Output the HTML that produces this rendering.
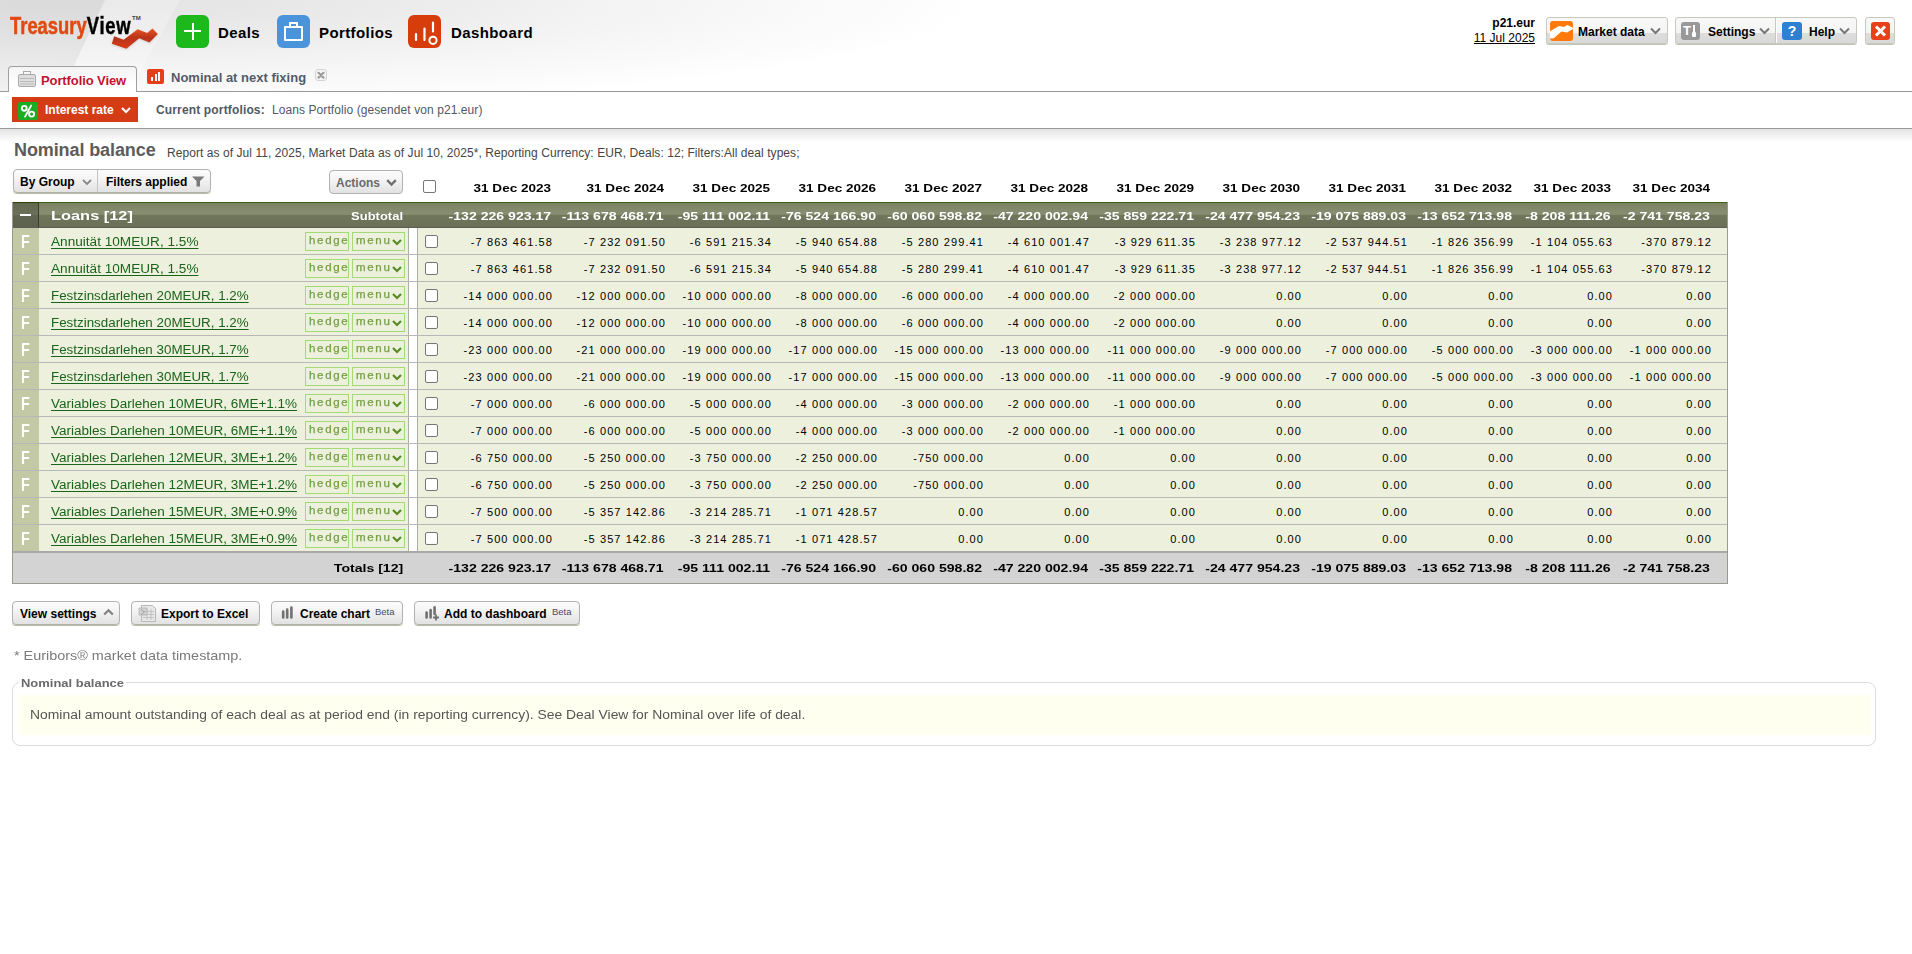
<!DOCTYPE html>
<html><head><meta charset="utf-8">
<style>
*{box-sizing:border-box;margin:0;padding:0}
html,body{width:1912px;height:954px;overflow:hidden;background:#fff}
body{font-family:"Liberation Sans",sans-serif;font-size:12px;color:#000;position:relative}
.abs{position:absolute}
#hdr{position:absolute;left:0;top:0;width:1912px;height:91px;
 background:radial-gradient(ellipse 900px 110px at 80px 0px,#e2e2e2 0%,#ebebeb 35%,#f5f5f5 65%,#fcfcfc 90%,#ffffff 100%);}
.navic{position:absolute;top:15px;width:33px;height:33px;border-radius:6px}
.navtx{position:absolute;top:24px;font-weight:bold;font-size:15px;line-height:18px;color:#000;letter-spacing:0.4px}
.btn{position:absolute;border:1px solid #c8c9bd;border-radius:3px;
 background:linear-gradient(#f8f8f8 0%,#f4f4f4 58%,#dddddd 61%,#d9d9d9 100%);box-shadow:0 1px 0 #c4c4b4}
.btn2{position:absolute;border:1px solid #b2b2b2;border-radius:4px;background:linear-gradient(#fbfbfb 0%,#f4f4f4 40%,#e9e9e9 75%,#e2e2e2 100%);box-shadow:0 1px 0 #b9bc9f}
.btxt{position:absolute;font-weight:bold;font-size:12px;line-height:14px}
.chev{position:absolute}
.r{position:absolute;text-align:right;white-space:nowrap}
.r span,.lnk span,.gt span,.hbox span{display:inline-block}
.hd{font-weight:bold;font-size:11px;line-height:13px;color:#000}
.hd span{transform:scaleX(1.229);transform-origin:100% 50%}
.grp{background:linear-gradient(#7b8263 0%,#878d70 40%,#838a6c 50%,#70765b 52%,#6a7056 100%);border-top:1px solid #3d5e0e;border-bottom:1px solid #5c5c58}
.grpm{background:linear-gradient(#62674f 0%,#6b7059 48%,#5f6550 52%,#5d624e 100%);border-top:1px solid #2c4600;border-right:1px solid #3a3e30;border-bottom:1px solid #5c5c58}
.gt{font-weight:bold;font-size:11px;line-height:13px;color:#fff;position:absolute;white-space:nowrap}
.gt span{transform:scaleX(1.28);transform-origin:100% 50%}
.rowbg{left:13px;width:1714px;height:27px;background:#edf0dd;border-bottom:1px solid #b8b8b8}
.fcell{left:13px;width:26px;height:26px;background:#c2c9a4;color:#fff;font-weight:bold;font-size:18px;line-height:26px;text-align:center}
.fcell span{display:inline-block;transform:scaleX(0.8);position:relative;top:1px;left:-1px}
.lnk{left:51px;font-size:12px;line-height:14px;color:#1b641b;white-space:nowrap}
.lnk span{transform-origin:0 50%;text-decoration:underline;text-underline-offset:2px}
.hbox{left:305px;width:44px;height:19px;border:1px solid #a3d977;color:#76a044;font-size:10.5px;line-height:15px;padding-left:3px;letter-spacing:1.5px;-webkit-text-stroke:0.25px #76a044}
.mbox{left:352px;width:53px;height:19px;border:1px solid #a3d977;color:#76a044;font-size:10.5px;line-height:15px;padding-left:3px;letter-spacing:1.5px;-webkit-text-stroke:0.25px #76a044}
.hbox span,.mbox span{display:inline-block;transform:scaleX(1.1);transform-origin:0 50%}
.mbox svg{position:absolute;left:39px;top:6px}
.sep{left:408px;width:10px;height:26px;background:#fff;border-left:1px solid #b0aca0;border-right:1px solid #b0aca0}
.cb{left:425px;width:13px;height:13px;border:1px solid #767676;border-radius:2px;background:#fff}
.nv{font-size:11px;line-height:13px;color:#000}
.nv span{letter-spacing:1.1px;margin-right:-2px}
.tt{font-weight:bold;font-size:11px;line-height:13px;color:#000}
.tt span{transform:scaleX(1.28);transform-origin:100% 50%}
.beta{font-size:9.5px;line-height:11px;color:#4a4a6a;white-space:nowrap}
.ft{font-size:13px;line-height:15px;color:#7a7a7a;white-space:nowrap}
.ft span,.lg span,.ds span{display:inline-block;transform-origin:0 50%}
.ft span{transform:scaleX(1.108)}
.lg{font-size:11px;line-height:13px;font-weight:bold;color:#6a6a6a;white-space:nowrap}
.lg span{transform:scaleX(1.178)}
.ds{font-size:12px;line-height:14px;color:#555;white-space:nowrap}
.ds span{transform:scaleX(1.158)}
</style></head><body>
<div id="hdr"></div>
<div class="abs" style="left:0;top:0;width:200px;height:91px;background:rgba(0,0,0,0.035);clip-path:polygon(0 0,105px 0,62px 91px,0 91px)"></div>
<div class="abs" style="left:0;top:0;width:260px;height:91px;background:rgba(255,255,255,0.25);clip-path:polygon(105px 0,180px 0,130px 91px,62px 91px)"></div>
<!-- logo -->
<div class="abs" style="left:10px;top:13px;font-size:23px;line-height:26px;font-weight:bold;-webkit-text-stroke:0.5px currentColor;transform:scaleX(0.80);transform-origin:0 0;color:#e04a10;white-space:nowrap">Treasury<span style="color:#000;letter-spacing:0.9px">View</span></div>
<div class="abs" style="left:132px;top:15px;font-size:6px;line-height:7px;font-weight:bold;color:#444">TM</div>
<svg class="abs" style="left:110px;top:27px" width="52" height="26" viewBox="0 0 52 26">
 <defs><linearGradient id="sw" x1="0" y1="0" x2="0" y2="1"><stop offset="0" stop-color="#ec5124"/><stop offset="0.45" stop-color="#b8351a"/><stop offset="1" stop-color="#d93c18"/></linearGradient>
 <filter id="sh" x="-20%" y="-20%" width="140%" height="160%"><feGaussianBlur stdDeviation="1.2"/></filter></defs>
 <path d="M4.2 10.2 L13.6 13.7 L27.7 3.3 L37.2 7.1 L42.4 2.6 L47.8 8.1 L39.5 16.5 L29.2 12.3 L16.4 22.7 L1.8 17.7 Z" fill="#999" opacity="0.35" filter="url(#sh)"/>
 <path d="M4.2 9.2 L13.6 12.7 L27.7 2.3 L37.2 6.1 L42.4 1.6 L47.8 7.1 L39.5 15.5 L29.2 11.3 L16.4 21.7 L1.8 16.7 Z" fill="url(#sw)"/>
</svg>
<!-- nav -->
<div class="navic" style="left:176px;background:#1cb81c">
 <div class="abs" style="left:8px;top:15px;width:17px;height:2px;background:#fff"></div>
 <div class="abs" style="left:15.5px;top:8px;width:2px;height:17px;background:#fff"></div>
</div>
<div class="navtx" style="left:218px">Deals</div>
<div class="navic" style="left:277px;background:#4a94dc">
 <div class="abs" style="left:7px;top:11px;width:19px;height:15px;border:2px solid #fff;border-radius:1px"></div>
 <div class="abs" style="left:12px;top:7px;width:9px;height:5px;border:2px solid #fff;border-bottom:none;border-radius:1px 1px 0 0"></div>
</div>
<div class="navtx" style="left:319px">Portfolios</div>
<div class="navic" style="left:408px;background:#d73d0a">
 <svg class="abs" style="left:0;top:0" width="33" height="33" viewBox="0 0 33 33">
  <path d="M8 19 V25 M16.5 13.5 V25 M25 7.5 V16.5" stroke="#fff" stroke-width="2.2" stroke-linecap="round"/>
  <circle cx="25" cy="25.3" r="3.6" fill="none" stroke="#fff" stroke-width="2"/>
 </svg>
</div>
<div class="navtx" style="left:451px">Dashboard</div>

<!-- right header -->
<div class="abs" style="left:1435px;top:16px;width:100px;text-align:right;font-weight:bold;font-size:12px;line-height:14px">p21.eur</div>
<div class="abs" style="left:1435px;top:31px;width:100px;text-align:right;font-size:12px;line-height:14px"><span style="text-decoration:underline">11 Jul 2025</span></div>

<div class="btn" style="left:1546px;top:17px;width:122px;height:27px"></div>
<div class="abs" style="left:1550px;top:21px;width:23px;height:20px;background:#ff7a0a;border-radius:3px;overflow:hidden">
 <svg width="23" height="20" viewBox="0 0 23 20"><path d="M-1 10.8 L9 4.9 L14.1 5.9 L17.3 4.1 L23.5 6.9 L23.5 7.6 L16.9 11.6 L11.4 10.6 L3.8 17.2 L-1 17.6 Z" fill="#fff"/></svg>
</div>
<div class="btxt" style="left:1578px;top:25px">Market data</div>
<svg class="chev" style="left:1650px;top:27px" width="11" height="8" viewBox="0 0 11 8"><path d="M1 1.5 L5.5 6 L10 1.5" stroke="#777" stroke-width="2" fill="none"/></svg>

<div class="btn" style="left:1675px;top:17px;width:182px;height:27px"></div>
<div class="abs" style="left:1775px;top:18px;width:1px;height:25px;background:#c8c9bd"></div>
<div class="abs" style="left:1776px;top:18px;width:1px;height:25px;background:#fff"></div>
<div class="abs" style="left:1681px;top:22px;width:19px;height:18px;background:#999;border-radius:3px"></div>
<div class="abs" style="left:1683px;top:23px;font-size:13px;font-weight:bold;color:#fff;line-height:16px">T</div>
<div class="abs" style="left:1693px;top:25px;width:2px;height:8px;background:#fff"></div>
<div class="abs" style="left:1692px;top:32px;width:4px;height:5px;background:#fff;border-radius:1px"></div>
<div class="btxt" style="left:1708px;top:25px">Settings</div>
<svg class="chev" style="left:1759px;top:27px" width="11" height="8" viewBox="0 0 11 8"><path d="M1 1.5 L5.5 6 L10 1.5" stroke="#777" stroke-width="2" fill="none"/></svg>
<div class="abs" style="left:1782px;top:22px;width:20px;height:18px;background:#2e80d2;border-radius:3px;color:#fff;font-weight:bold;font-size:14px;line-height:18px;text-align:center">?</div>
<div class="btxt" style="left:1809px;top:25px">Help</div>
<svg class="chev" style="left:1839px;top:27px" width="11" height="8" viewBox="0 0 11 8"><path d="M1 1.5 L5.5 6 L10 1.5" stroke="#777" stroke-width="2" fill="none"/></svg>

<div class="btn" style="left:1865px;top:17px;width:30px;height:27px"></div>
<div class="abs" style="left:1871px;top:22px;width:19px;height:18px;background:#e8411a;border-radius:3px">
 <svg width="19" height="18" viewBox="0 0 19 18"><path d="M5 4.5 L14 13.5 M14 4.5 L5 13.5" stroke="#fff" stroke-width="3"/></svg>
</div>


<!-- tabs -->
<div class="abs" style="left:0;top:91px;width:1912px;height:1px;background:#9a9a9a"></div>
<div class="abs" style="left:8px;top:66px;width:129px;height:26px;border:1px solid #a0a0a0;border-bottom:none;border-radius:4px 4px 0 0;background:linear-gradient(#f4f4f4,#fff 70%)"></div>
<svg class="abs" style="left:18px;top:71px" width="18" height="16" viewBox="0 0 18 16">
 <rect x="0.5" y="3.5" width="17" height="12" rx="1.5" fill="#ddd" stroke="#aaa"/>
 <rect x="5.5" y="0.5" width="7" height="3" fill="none" stroke="#aaa"/>
 <path d="M2 7.5 H16 M2 10.5 H16 M2 13 H16" stroke="#bbb"/>
</svg>
<div class="abs" style="left:41px;top:73px;font-weight:bold;font-size:13px;line-height:15px;color:#c4122e;white-space:nowrap;letter-spacing:-0.1px">Portfolio View</div>
<div class="abs" style="left:147px;top:69px;width:17px;height:15px;background:#e2401a;border-radius:2px">
 <div class="abs" style="left:4px;top:8px;width:2px;height:4px;background:#fff"></div>
 <div class="abs" style="left:7.5px;top:5px;width:2px;height:7px;background:#fff"></div>
 <div class="abs" style="left:11px;top:3px;width:2px;height:9px;background:#fff"></div>
</div>
<div class="abs" style="left:171px;top:70px;font-weight:bold;font-size:13px;line-height:15px;color:#545b68;white-space:nowrap">Nominal at next fixing</div>
<div class="abs" style="left:315px;top:69px;width:12px;height:12px;border:1px solid #d2d4d4;border-radius:3px;background:#f4f4f4">
 <svg class="abs" style="left:0;top:0" width="10" height="10" viewBox="0 0 10 10"><path d="M2.5 2.8 L7.5 7.6 M7.5 2.8 L2.5 7.6" stroke="#9c9c9c" stroke-width="2.2" stroke-linecap="round"/></svg>
</div>

<!-- subbar -->
<div class="abs" style="left:12px;top:97px;width:126px;height:25px;background:#d43c15"></div>
<div class="abs" style="left:18px;top:102px;width:20px;height:18px;background:#1aac22;border-radius:2px">
 <svg width="20" height="18" viewBox="0 0 20 18"><circle cx="6.3" cy="6.3" r="2.4" fill="none" stroke="#fff" stroke-width="1.9"/><circle cx="13.6" cy="12.1" r="2.5" fill="none" stroke="#fff" stroke-width="1.9"/><path d="M13.1 3.6 L7.1 14.6" stroke="#fff" stroke-width="1.9" stroke-linecap="round"/></svg>
</div>
<div class="abs" style="left:45px;top:103px;font-weight:bold;font-size:12px;line-height:14px;color:#fff;white-space:nowrap">Interest rate</div>
<svg class="abs" style="left:121px;top:107px" width="10" height="7" viewBox="0 0 10 7"><path d="M1 1 L5 5 L9 1" stroke="#fff" stroke-width="2" fill="none"/></svg>
<div class="abs" style="left:156px;top:103px;font-weight:bold;font-size:12px;line-height:14px;color:#505866;white-space:nowrap;letter-spacing:0.15px">Current portfolios:</div>
<div class="abs" style="left:272px;top:103px;font-size:12px;line-height:14px;color:#505866;white-space:nowrap;letter-spacing:0.08px">Loans Portfolio (gesendet von p21.eur)</div>
<div class="abs" style="left:0;top:128px;width:1912px;height:1px;background:#9a9a9a"></div>
<div class="abs" style="left:0;top:129px;width:1912px;height:13px;background:linear-gradient(#e4e4e4,#f4f4f4 60%,#fff)"></div>

<!-- title -->
<div class="abs" style="left:14px;top:140px;font-weight:bold;font-size:18px;line-height:20px;color:#5c5c5c;letter-spacing:-0.1px;white-space:nowrap">Nominal balance</div>
<div class="abs" style="left:167px;top:146px;font-size:12px;line-height:14px;color:#444;white-space:nowrap;letter-spacing:0.06px">Report as of Jul 11, 2025, Market Data as of Jul 10, 2025*, Reporting Currency: EUR, Deals: 12; Filters:All deal types;</div>

<!-- toolbar -->
<div class="btn2" style="left:13px;top:169px;width:198px;height:24px"></div>
<div class="abs" style="left:97px;top:170px;width:1px;height:22px;background:#c4c4c4"></div>
<div class="btxt" style="left:20px;top:175px">By Group</div>
<svg class="chev" style="left:82px;top:179px" width="10" height="7" viewBox="0 0 10 7"><path d="M1 1 L5 5 L9 1" stroke="#888" stroke-width="1.8" fill="none"/></svg>
<div class="btxt" style="left:106px;top:175px">Filters applied</div>
<svg class="abs" style="left:192px;top:176px" width="13" height="11" viewBox="0 0 13 11"><path d="M0 0.5 H12.5 L8 5 V10.5 L4.5 10.5 V5 Z" fill="#7a7a7a"/></svg>
<div class="btn2" style="left:329px;top:170px;width:74px;height:24px;box-shadow:none"></div>
<div class="btxt" style="left:336px;top:176px;color:#6a6a6a">Actions</div>
<svg class="chev" style="left:386px;top:179px" width="11" height="8" viewBox="0 0 11 8"><path d="M1.2 1.2 L5.5 5.5 L9.8 1.2" stroke="#707070" stroke-width="2.4" fill="none"/></svg>
<div class="abs" style="left:423px;top:180px;width:13px;height:13px;border:1px solid #767676;border-radius:2px;background:#fff"></div>
<!-- TABLE -->
<div class="r hd" style="right:1361px;top:182px"><span>31 Dec 2023</span></div>
<div class="r hd" style="right:1248px;top:182px"><span>31 Dec 2024</span></div>
<div class="r hd" style="right:1142px;top:182px"><span>31 Dec 2025</span></div>
<div class="r hd" style="right:1036px;top:182px"><span>31 Dec 2026</span></div>
<div class="r hd" style="right:930px;top:182px"><span>31 Dec 2027</span></div>
<div class="r hd" style="right:824px;top:182px"><span>31 Dec 2028</span></div>
<div class="r hd" style="right:718px;top:182px"><span>31 Dec 2029</span></div>
<div class="r hd" style="right:612px;top:182px"><span>31 Dec 2030</span></div>
<div class="r hd" style="right:506px;top:182px"><span>31 Dec 2031</span></div>
<div class="r hd" style="right:400px;top:182px"><span>31 Dec 2032</span></div>
<div class="r hd" style="right:301px;top:182px"><span>31 Dec 2033</span></div>
<div class="r hd" style="right:202px;top:182px"><span>31 Dec 2034</span></div>
<div class="abs" style="left:12px;top:202px;width:1716px;height:382px;border:1px solid #9a9a90;border-top:none"></div>
<div class="abs grp" style="left:13px;top:202px;width:1714px;height:26px"></div>
<div class="abs grpm" style="left:13px;top:202px;width:26px;height:26px"></div>
<div class="abs" style="left:20px;top:214px;width:11px;height:2px;background:#fff"></div>
<div class="abs gt" style="left:51px;top:209px;font-size:13px"><span style="transform-origin:0 50%;transform:scaleX(1.26)">Loans [12]</span></div>
<div class="r gt" style="right:1509px;top:210px"><span style="transform:scaleX(1.18)">Subtotal</span></div>
<div class="r gt" style="right:1361px;top:210px"><span>-132 226 923.17</span></div>
<div class="r gt" style="right:1248px;top:210px"><span>-113 678 468.71</span></div>
<div class="r gt" style="right:1142px;top:210px"><span>-95 111 002.11</span></div>
<div class="r gt" style="right:1036px;top:210px"><span>-76 524 166.90</span></div>
<div class="r gt" style="right:930px;top:210px"><span>-60 060 598.82</span></div>
<div class="r gt" style="right:824px;top:210px"><span>-47 220 002.94</span></div>
<div class="r gt" style="right:718px;top:210px"><span>-35 859 222.71</span></div>
<div class="r gt" style="right:612px;top:210px"><span>-24 477 954.23</span></div>
<div class="r gt" style="right:506px;top:210px"><span>-19 075 889.03</span></div>
<div class="r gt" style="right:400px;top:210px"><span>-13 652 713.98</span></div>
<div class="r gt" style="right:301px;top:210px"><span>-8 208 111.26</span></div>
<div class="r gt" style="right:202px;top:210px"><span>-2 741 758.23</span></div>
<div class="abs rowbg" style="top:228px"></div>
<div class="abs fcell" style="top:228px"><span>F</span></div>
<div class="abs lnk" style="top:235px"><span style="transform:scaleX(1.134)">Annuität 10MEUR, 1.5%</span></div>
<div class="abs hbox" style="top:232px"><span>hedge</span></div>
<div class="abs mbox" style="top:232px"><span>menu</span><svg width="10" height="7" viewBox="0 0 10 7"><path d="M1 1 L5 5 L9 1" stroke="#5b8a22" stroke-width="2.2" fill="none"/></svg></div>
<div class="abs sep" style="top:228px"></div>
<div class="abs cb" style="top:235px"></div>
<div class="r nv" style="right:1361px;top:236px"><span>-7 863 461.58</span></div>
<div class="r nv" style="right:1248px;top:236px"><span>-7 232 091.50</span></div>
<div class="r nv" style="right:1142px;top:236px"><span>-6 591 215.34</span></div>
<div class="r nv" style="right:1036px;top:236px"><span>-5 940 654.88</span></div>
<div class="r nv" style="right:930px;top:236px"><span>-5 280 299.41</span></div>
<div class="r nv" style="right:824px;top:236px"><span>-4 610 001.47</span></div>
<div class="r nv" style="right:718px;top:236px"><span>-3 929 611.35</span></div>
<div class="r nv" style="right:612px;top:236px"><span>-3 238 977.12</span></div>
<div class="r nv" style="right:506px;top:236px"><span>-2 537 944.51</span></div>
<div class="r nv" style="right:400px;top:236px"><span>-1 826 356.99</span></div>
<div class="r nv" style="right:301px;top:236px"><span>-1 104 055.63</span></div>
<div class="r nv" style="right:202px;top:236px"><span>-370 879.12</span></div>
<div class="abs rowbg" style="top:255px"></div>
<div class="abs fcell" style="top:255px"><span>F</span></div>
<div class="abs lnk" style="top:262px"><span style="transform:scaleX(1.134)">Annuität 10MEUR, 1.5%</span></div>
<div class="abs hbox" style="top:259px"><span>hedge</span></div>
<div class="abs mbox" style="top:259px"><span>menu</span><svg width="10" height="7" viewBox="0 0 10 7"><path d="M1 1 L5 5 L9 1" stroke="#5b8a22" stroke-width="2.2" fill="none"/></svg></div>
<div class="abs sep" style="top:255px"></div>
<div class="abs cb" style="top:262px"></div>
<div class="r nv" style="right:1361px;top:263px"><span>-7 863 461.58</span></div>
<div class="r nv" style="right:1248px;top:263px"><span>-7 232 091.50</span></div>
<div class="r nv" style="right:1142px;top:263px"><span>-6 591 215.34</span></div>
<div class="r nv" style="right:1036px;top:263px"><span>-5 940 654.88</span></div>
<div class="r nv" style="right:930px;top:263px"><span>-5 280 299.41</span></div>
<div class="r nv" style="right:824px;top:263px"><span>-4 610 001.47</span></div>
<div class="r nv" style="right:718px;top:263px"><span>-3 929 611.35</span></div>
<div class="r nv" style="right:612px;top:263px"><span>-3 238 977.12</span></div>
<div class="r nv" style="right:506px;top:263px"><span>-2 537 944.51</span></div>
<div class="r nv" style="right:400px;top:263px"><span>-1 826 356.99</span></div>
<div class="r nv" style="right:301px;top:263px"><span>-1 104 055.63</span></div>
<div class="r nv" style="right:202px;top:263px"><span>-370 879.12</span></div>
<div class="abs rowbg" style="top:282px"></div>
<div class="abs fcell" style="top:282px"><span>F</span></div>
<div class="abs lnk" style="top:289px"><span style="transform:scaleX(1.114)">Festzinsdarlehen 20MEUR, 1.2%</span></div>
<div class="abs hbox" style="top:286px"><span>hedge</span></div>
<div class="abs mbox" style="top:286px"><span>menu</span><svg width="10" height="7" viewBox="0 0 10 7"><path d="M1 1 L5 5 L9 1" stroke="#5b8a22" stroke-width="2.2" fill="none"/></svg></div>
<div class="abs sep" style="top:282px"></div>
<div class="abs cb" style="top:289px"></div>
<div class="r nv" style="right:1361px;top:290px"><span>-14 000 000.00</span></div>
<div class="r nv" style="right:1248px;top:290px"><span>-12 000 000.00</span></div>
<div class="r nv" style="right:1142px;top:290px"><span>-10 000 000.00</span></div>
<div class="r nv" style="right:1036px;top:290px"><span>-8 000 000.00</span></div>
<div class="r nv" style="right:930px;top:290px"><span>-6 000 000.00</span></div>
<div class="r nv" style="right:824px;top:290px"><span>-4 000 000.00</span></div>
<div class="r nv" style="right:718px;top:290px"><span>-2 000 000.00</span></div>
<div class="r nv" style="right:612px;top:290px"><span>0.00</span></div>
<div class="r nv" style="right:506px;top:290px"><span>0.00</span></div>
<div class="r nv" style="right:400px;top:290px"><span>0.00</span></div>
<div class="r nv" style="right:301px;top:290px"><span>0.00</span></div>
<div class="r nv" style="right:202px;top:290px"><span>0.00</span></div>
<div class="abs rowbg" style="top:309px"></div>
<div class="abs fcell" style="top:309px"><span>F</span></div>
<div class="abs lnk" style="top:316px"><span style="transform:scaleX(1.114)">Festzinsdarlehen 20MEUR, 1.2%</span></div>
<div class="abs hbox" style="top:313px"><span>hedge</span></div>
<div class="abs mbox" style="top:313px"><span>menu</span><svg width="10" height="7" viewBox="0 0 10 7"><path d="M1 1 L5 5 L9 1" stroke="#5b8a22" stroke-width="2.2" fill="none"/></svg></div>
<div class="abs sep" style="top:309px"></div>
<div class="abs cb" style="top:316px"></div>
<div class="r nv" style="right:1361px;top:317px"><span>-14 000 000.00</span></div>
<div class="r nv" style="right:1248px;top:317px"><span>-12 000 000.00</span></div>
<div class="r nv" style="right:1142px;top:317px"><span>-10 000 000.00</span></div>
<div class="r nv" style="right:1036px;top:317px"><span>-8 000 000.00</span></div>
<div class="r nv" style="right:930px;top:317px"><span>-6 000 000.00</span></div>
<div class="r nv" style="right:824px;top:317px"><span>-4 000 000.00</span></div>
<div class="r nv" style="right:718px;top:317px"><span>-2 000 000.00</span></div>
<div class="r nv" style="right:612px;top:317px"><span>0.00</span></div>
<div class="r nv" style="right:506px;top:317px"><span>0.00</span></div>
<div class="r nv" style="right:400px;top:317px"><span>0.00</span></div>
<div class="r nv" style="right:301px;top:317px"><span>0.00</span></div>
<div class="r nv" style="right:202px;top:317px"><span>0.00</span></div>
<div class="abs rowbg" style="top:336px"></div>
<div class="abs fcell" style="top:336px"><span>F</span></div>
<div class="abs lnk" style="top:343px"><span style="transform:scaleX(1.114)">Festzinsdarlehen 30MEUR, 1.7%</span></div>
<div class="abs hbox" style="top:340px"><span>hedge</span></div>
<div class="abs mbox" style="top:340px"><span>menu</span><svg width="10" height="7" viewBox="0 0 10 7"><path d="M1 1 L5 5 L9 1" stroke="#5b8a22" stroke-width="2.2" fill="none"/></svg></div>
<div class="abs sep" style="top:336px"></div>
<div class="abs cb" style="top:343px"></div>
<div class="r nv" style="right:1361px;top:344px"><span>-23 000 000.00</span></div>
<div class="r nv" style="right:1248px;top:344px"><span>-21 000 000.00</span></div>
<div class="r nv" style="right:1142px;top:344px"><span>-19 000 000.00</span></div>
<div class="r nv" style="right:1036px;top:344px"><span>-17 000 000.00</span></div>
<div class="r nv" style="right:930px;top:344px"><span>-15 000 000.00</span></div>
<div class="r nv" style="right:824px;top:344px"><span>-13 000 000.00</span></div>
<div class="r nv" style="right:718px;top:344px"><span>-11 000 000.00</span></div>
<div class="r nv" style="right:612px;top:344px"><span>-9 000 000.00</span></div>
<div class="r nv" style="right:506px;top:344px"><span>-7 000 000.00</span></div>
<div class="r nv" style="right:400px;top:344px"><span>-5 000 000.00</span></div>
<div class="r nv" style="right:301px;top:344px"><span>-3 000 000.00</span></div>
<div class="r nv" style="right:202px;top:344px"><span>-1 000 000.00</span></div>
<div class="abs rowbg" style="top:363px"></div>
<div class="abs fcell" style="top:363px"><span>F</span></div>
<div class="abs lnk" style="top:370px"><span style="transform:scaleX(1.114)">Festzinsdarlehen 30MEUR, 1.7%</span></div>
<div class="abs hbox" style="top:367px"><span>hedge</span></div>
<div class="abs mbox" style="top:367px"><span>menu</span><svg width="10" height="7" viewBox="0 0 10 7"><path d="M1 1 L5 5 L9 1" stroke="#5b8a22" stroke-width="2.2" fill="none"/></svg></div>
<div class="abs sep" style="top:363px"></div>
<div class="abs cb" style="top:370px"></div>
<div class="r nv" style="right:1361px;top:371px"><span>-23 000 000.00</span></div>
<div class="r nv" style="right:1248px;top:371px"><span>-21 000 000.00</span></div>
<div class="r nv" style="right:1142px;top:371px"><span>-19 000 000.00</span></div>
<div class="r nv" style="right:1036px;top:371px"><span>-17 000 000.00</span></div>
<div class="r nv" style="right:930px;top:371px"><span>-15 000 000.00</span></div>
<div class="r nv" style="right:824px;top:371px"><span>-13 000 000.00</span></div>
<div class="r nv" style="right:718px;top:371px"><span>-11 000 000.00</span></div>
<div class="r nv" style="right:612px;top:371px"><span>-9 000 000.00</span></div>
<div class="r nv" style="right:506px;top:371px"><span>-7 000 000.00</span></div>
<div class="r nv" style="right:400px;top:371px"><span>-5 000 000.00</span></div>
<div class="r nv" style="right:301px;top:371px"><span>-3 000 000.00</span></div>
<div class="r nv" style="right:202px;top:371px"><span>-1 000 000.00</span></div>
<div class="abs rowbg" style="top:390px"></div>
<div class="abs fcell" style="top:390px"><span>F</span></div>
<div class="abs lnk" style="top:397px"><span style="transform:scaleX(1.124)">Variables Darlehen 10MEUR, 6ME+1.1%</span></div>
<div class="abs hbox" style="top:394px"><span>hedge</span></div>
<div class="abs mbox" style="top:394px"><span>menu</span><svg width="10" height="7" viewBox="0 0 10 7"><path d="M1 1 L5 5 L9 1" stroke="#5b8a22" stroke-width="2.2" fill="none"/></svg></div>
<div class="abs sep" style="top:390px"></div>
<div class="abs cb" style="top:397px"></div>
<div class="r nv" style="right:1361px;top:398px"><span>-7 000 000.00</span></div>
<div class="r nv" style="right:1248px;top:398px"><span>-6 000 000.00</span></div>
<div class="r nv" style="right:1142px;top:398px"><span>-5 000 000.00</span></div>
<div class="r nv" style="right:1036px;top:398px"><span>-4 000 000.00</span></div>
<div class="r nv" style="right:930px;top:398px"><span>-3 000 000.00</span></div>
<div class="r nv" style="right:824px;top:398px"><span>-2 000 000.00</span></div>
<div class="r nv" style="right:718px;top:398px"><span>-1 000 000.00</span></div>
<div class="r nv" style="right:612px;top:398px"><span>0.00</span></div>
<div class="r nv" style="right:506px;top:398px"><span>0.00</span></div>
<div class="r nv" style="right:400px;top:398px"><span>0.00</span></div>
<div class="r nv" style="right:301px;top:398px"><span>0.00</span></div>
<div class="r nv" style="right:202px;top:398px"><span>0.00</span></div>
<div class="abs rowbg" style="top:417px"></div>
<div class="abs fcell" style="top:417px"><span>F</span></div>
<div class="abs lnk" style="top:424px"><span style="transform:scaleX(1.124)">Variables Darlehen 10MEUR, 6ME+1.1%</span></div>
<div class="abs hbox" style="top:421px"><span>hedge</span></div>
<div class="abs mbox" style="top:421px"><span>menu</span><svg width="10" height="7" viewBox="0 0 10 7"><path d="M1 1 L5 5 L9 1" stroke="#5b8a22" stroke-width="2.2" fill="none"/></svg></div>
<div class="abs sep" style="top:417px"></div>
<div class="abs cb" style="top:424px"></div>
<div class="r nv" style="right:1361px;top:425px"><span>-7 000 000.00</span></div>
<div class="r nv" style="right:1248px;top:425px"><span>-6 000 000.00</span></div>
<div class="r nv" style="right:1142px;top:425px"><span>-5 000 000.00</span></div>
<div class="r nv" style="right:1036px;top:425px"><span>-4 000 000.00</span></div>
<div class="r nv" style="right:930px;top:425px"><span>-3 000 000.00</span></div>
<div class="r nv" style="right:824px;top:425px"><span>-2 000 000.00</span></div>
<div class="r nv" style="right:718px;top:425px"><span>-1 000 000.00</span></div>
<div class="r nv" style="right:612px;top:425px"><span>0.00</span></div>
<div class="r nv" style="right:506px;top:425px"><span>0.00</span></div>
<div class="r nv" style="right:400px;top:425px"><span>0.00</span></div>
<div class="r nv" style="right:301px;top:425px"><span>0.00</span></div>
<div class="r nv" style="right:202px;top:425px"><span>0.00</span></div>
<div class="abs rowbg" style="top:444px"></div>
<div class="abs fcell" style="top:444px"><span>F</span></div>
<div class="abs lnk" style="top:451px"><span style="transform:scaleX(1.124)">Variables Darlehen 12MEUR, 3ME+1.2%</span></div>
<div class="abs hbox" style="top:448px"><span>hedge</span></div>
<div class="abs mbox" style="top:448px"><span>menu</span><svg width="10" height="7" viewBox="0 0 10 7"><path d="M1 1 L5 5 L9 1" stroke="#5b8a22" stroke-width="2.2" fill="none"/></svg></div>
<div class="abs sep" style="top:444px"></div>
<div class="abs cb" style="top:451px"></div>
<div class="r nv" style="right:1361px;top:452px"><span>-6 750 000.00</span></div>
<div class="r nv" style="right:1248px;top:452px"><span>-5 250 000.00</span></div>
<div class="r nv" style="right:1142px;top:452px"><span>-3 750 000.00</span></div>
<div class="r nv" style="right:1036px;top:452px"><span>-2 250 000.00</span></div>
<div class="r nv" style="right:930px;top:452px"><span>-750 000.00</span></div>
<div class="r nv" style="right:824px;top:452px"><span>0.00</span></div>
<div class="r nv" style="right:718px;top:452px"><span>0.00</span></div>
<div class="r nv" style="right:612px;top:452px"><span>0.00</span></div>
<div class="r nv" style="right:506px;top:452px"><span>0.00</span></div>
<div class="r nv" style="right:400px;top:452px"><span>0.00</span></div>
<div class="r nv" style="right:301px;top:452px"><span>0.00</span></div>
<div class="r nv" style="right:202px;top:452px"><span>0.00</span></div>
<div class="abs rowbg" style="top:471px"></div>
<div class="abs fcell" style="top:471px"><span>F</span></div>
<div class="abs lnk" style="top:478px"><span style="transform:scaleX(1.124)">Variables Darlehen 12MEUR, 3ME+1.2%</span></div>
<div class="abs hbox" style="top:475px"><span>hedge</span></div>
<div class="abs mbox" style="top:475px"><span>menu</span><svg width="10" height="7" viewBox="0 0 10 7"><path d="M1 1 L5 5 L9 1" stroke="#5b8a22" stroke-width="2.2" fill="none"/></svg></div>
<div class="abs sep" style="top:471px"></div>
<div class="abs cb" style="top:478px"></div>
<div class="r nv" style="right:1361px;top:479px"><span>-6 750 000.00</span></div>
<div class="r nv" style="right:1248px;top:479px"><span>-5 250 000.00</span></div>
<div class="r nv" style="right:1142px;top:479px"><span>-3 750 000.00</span></div>
<div class="r nv" style="right:1036px;top:479px"><span>-2 250 000.00</span></div>
<div class="r nv" style="right:930px;top:479px"><span>-750 000.00</span></div>
<div class="r nv" style="right:824px;top:479px"><span>0.00</span></div>
<div class="r nv" style="right:718px;top:479px"><span>0.00</span></div>
<div class="r nv" style="right:612px;top:479px"><span>0.00</span></div>
<div class="r nv" style="right:506px;top:479px"><span>0.00</span></div>
<div class="r nv" style="right:400px;top:479px"><span>0.00</span></div>
<div class="r nv" style="right:301px;top:479px"><span>0.00</span></div>
<div class="r nv" style="right:202px;top:479px"><span>0.00</span></div>
<div class="abs rowbg" style="top:498px"></div>
<div class="abs fcell" style="top:498px"><span>F</span></div>
<div class="abs lnk" style="top:505px"><span style="transform:scaleX(1.124)">Variables Darlehen 15MEUR, 3ME+0.9%</span></div>
<div class="abs hbox" style="top:502px"><span>hedge</span></div>
<div class="abs mbox" style="top:502px"><span>menu</span><svg width="10" height="7" viewBox="0 0 10 7"><path d="M1 1 L5 5 L9 1" stroke="#5b8a22" stroke-width="2.2" fill="none"/></svg></div>
<div class="abs sep" style="top:498px"></div>
<div class="abs cb" style="top:505px"></div>
<div class="r nv" style="right:1361px;top:506px"><span>-7 500 000.00</span></div>
<div class="r nv" style="right:1248px;top:506px"><span>-5 357 142.86</span></div>
<div class="r nv" style="right:1142px;top:506px"><span>-3 214 285.71</span></div>
<div class="r nv" style="right:1036px;top:506px"><span>-1 071 428.57</span></div>
<div class="r nv" style="right:930px;top:506px"><span>0.00</span></div>
<div class="r nv" style="right:824px;top:506px"><span>0.00</span></div>
<div class="r nv" style="right:718px;top:506px"><span>0.00</span></div>
<div class="r nv" style="right:612px;top:506px"><span>0.00</span></div>
<div class="r nv" style="right:506px;top:506px"><span>0.00</span></div>
<div class="r nv" style="right:400px;top:506px"><span>0.00</span></div>
<div class="r nv" style="right:301px;top:506px"><span>0.00</span></div>
<div class="r nv" style="right:202px;top:506px"><span>0.00</span></div>
<div class="abs rowbg" style="top:525px"></div>
<div class="abs fcell" style="top:525px"><span>F</span></div>
<div class="abs lnk" style="top:532px"><span style="transform:scaleX(1.124)">Variables Darlehen 15MEUR, 3ME+0.9%</span></div>
<div class="abs hbox" style="top:529px"><span>hedge</span></div>
<div class="abs mbox" style="top:529px"><span>menu</span><svg width="10" height="7" viewBox="0 0 10 7"><path d="M1 1 L5 5 L9 1" stroke="#5b8a22" stroke-width="2.2" fill="none"/></svg></div>
<div class="abs sep" style="top:525px"></div>
<div class="abs cb" style="top:532px"></div>
<div class="r nv" style="right:1361px;top:533px"><span>-7 500 000.00</span></div>
<div class="r nv" style="right:1248px;top:533px"><span>-5 357 142.86</span></div>
<div class="r nv" style="right:1142px;top:533px"><span>-3 214 285.71</span></div>
<div class="r nv" style="right:1036px;top:533px"><span>-1 071 428.57</span></div>
<div class="r nv" style="right:930px;top:533px"><span>0.00</span></div>
<div class="r nv" style="right:824px;top:533px"><span>0.00</span></div>
<div class="r nv" style="right:718px;top:533px"><span>0.00</span></div>
<div class="r nv" style="right:612px;top:533px"><span>0.00</span></div>
<div class="r nv" style="right:506px;top:533px"><span>0.00</span></div>
<div class="r nv" style="right:400px;top:533px"><span>0.00</span></div>
<div class="r nv" style="right:301px;top:533px"><span>0.00</span></div>
<div class="r nv" style="right:202px;top:533px"><span>0.00</span></div>
<div class="abs" style="left:13px;top:551px;width:1714px;height:2px;background:#a8a8a8"></div>
<div class="abs" style="left:13px;top:553px;width:1714px;height:30px;background:#d3d3d3"></div>
<div class="r tt" style="right:1509px;top:562px"><span>Totals [12]</span></div>
<div class="r tt" style="right:1361px;top:562px"><span>-132 226 923.17</span></div>
<div class="r tt" style="right:1248px;top:562px"><span>-113 678 468.71</span></div>
<div class="r tt" style="right:1142px;top:562px"><span>-95 111 002.11</span></div>
<div class="r tt" style="right:1036px;top:562px"><span>-76 524 166.90</span></div>
<div class="r tt" style="right:930px;top:562px"><span>-60 060 598.82</span></div>
<div class="r tt" style="right:824px;top:562px"><span>-47 220 002.94</span></div>
<div class="r tt" style="right:718px;top:562px"><span>-35 859 222.71</span></div>
<div class="r tt" style="right:612px;top:562px"><span>-24 477 954.23</span></div>
<div class="r tt" style="right:506px;top:562px"><span>-19 075 889.03</span></div>
<div class="r tt" style="right:400px;top:562px"><span>-13 652 713.98</span></div>
<div class="r tt" style="right:301px;top:562px"><span>-8 208 111.26</span></div>
<div class="r tt" style="right:202px;top:562px"><span>-2 741 758.23</span></div>
<!-- /TABLE -->

<!-- BOTTOM -->
<div class="btn2" style="left:12px;top:601px;width:108px;height:24px"></div>
<div class="btxt" style="left:20px;top:607px">View settings</div>
<svg class="chev" style="left:103px;top:608px" width="11" height="8" viewBox="0 0 11 8"><path d="M1.2 6.5 L5.5 2.2 L9.8 6.5" stroke="#808080" stroke-width="2.2" fill="none"/></svg>
<div class="btn2" style="left:131px;top:601px;width:129px;height:24px"></div>
<svg class="abs" style="left:138px;top:604px" width="19" height="18" viewBox="0 0 19 18">
 <path d="M3.5 1.5 H14.5 L17.5 4.5 V17.5 H3.5 Z" fill="#e8e8e8" stroke="#b8b8b8"/>
 <path d="M1 4 H9 V11 H1 Z" fill="#d4d4d4" stroke="#b0b0b0" stroke-width="0.8"/>
 <path d="M5 7.5 H16 M5 10.5 H16 M5 13.5 H16 M9 5 V16 M13 5 V16" stroke="#bdbdbd" stroke-width="0.9"/>
 <path d="M3 5.5 L6.5 8 L3 10.5" stroke="#a0a0a0" fill="none" stroke-width="1"/>
</svg>
<div class="btxt" style="left:161px;top:607px">Export to Excel</div>
<div class="btn2" style="left:271px;top:601px;width:132px;height:24px"></div>
<svg class="abs" style="left:281px;top:606px" width="14" height="14" viewBox="0 0 14 14">
 <path d="M2.2 5.5 V11.5 M6.2 3.5 V11.5 M10.4 1.5 V11.5" stroke="#707070" stroke-width="2.6" stroke-linecap="round"/>
</svg>
<div class="btxt" style="left:300px;top:607px">Create chart</div><div class="abs beta" style="left:375px;top:606px">Beta</div>
<div class="btn2" style="left:414px;top:601px;width:166px;height:24px"></div>
<svg class="abs" style="left:424px;top:605px" width="17" height="17" viewBox="0 0 17 17">
 <path d="M2.6 7.5 V12.5 M6.6 5 V12.5 M10.6 2.4 V9" stroke="#707070" stroke-width="2.6" stroke-linecap="round"/>
 <path d="M12 9.5 V15.5 M9 12.5 H15" stroke="#707070" stroke-width="1.8"/>
</svg>
<div class="btxt" style="left:444px;top:607px">Add to dashboard</div><div class="abs beta" style="left:552px;top:606px">Beta</div>

<div class="abs ft" style="left:14px;top:648px"><span>* Euribors® market data timestamp.</span></div>
<div class="abs" style="left:12px;top:682px;width:1864px;height:64px;border:1px solid #dcdcdc;border-radius:8px"></div>
<div class="abs" style="left:19px;top:675px;width:107px;height:14px;background:#fff"></div>
<div class="abs lg" style="left:21px;top:677px"><span>Nominal balance</span></div>
<div class="abs" style="left:19px;top:695px;width:1852px;height:40px;background:#fffff0"></div>
<div class="abs ds" style="left:30px;top:708px"><span>Nominal amount outstanding of each deal as at period end (in reporting currency). See Deal View for Nominal over life of deal.</span></div>
<!-- /BOTTOM -->
</body></html>
